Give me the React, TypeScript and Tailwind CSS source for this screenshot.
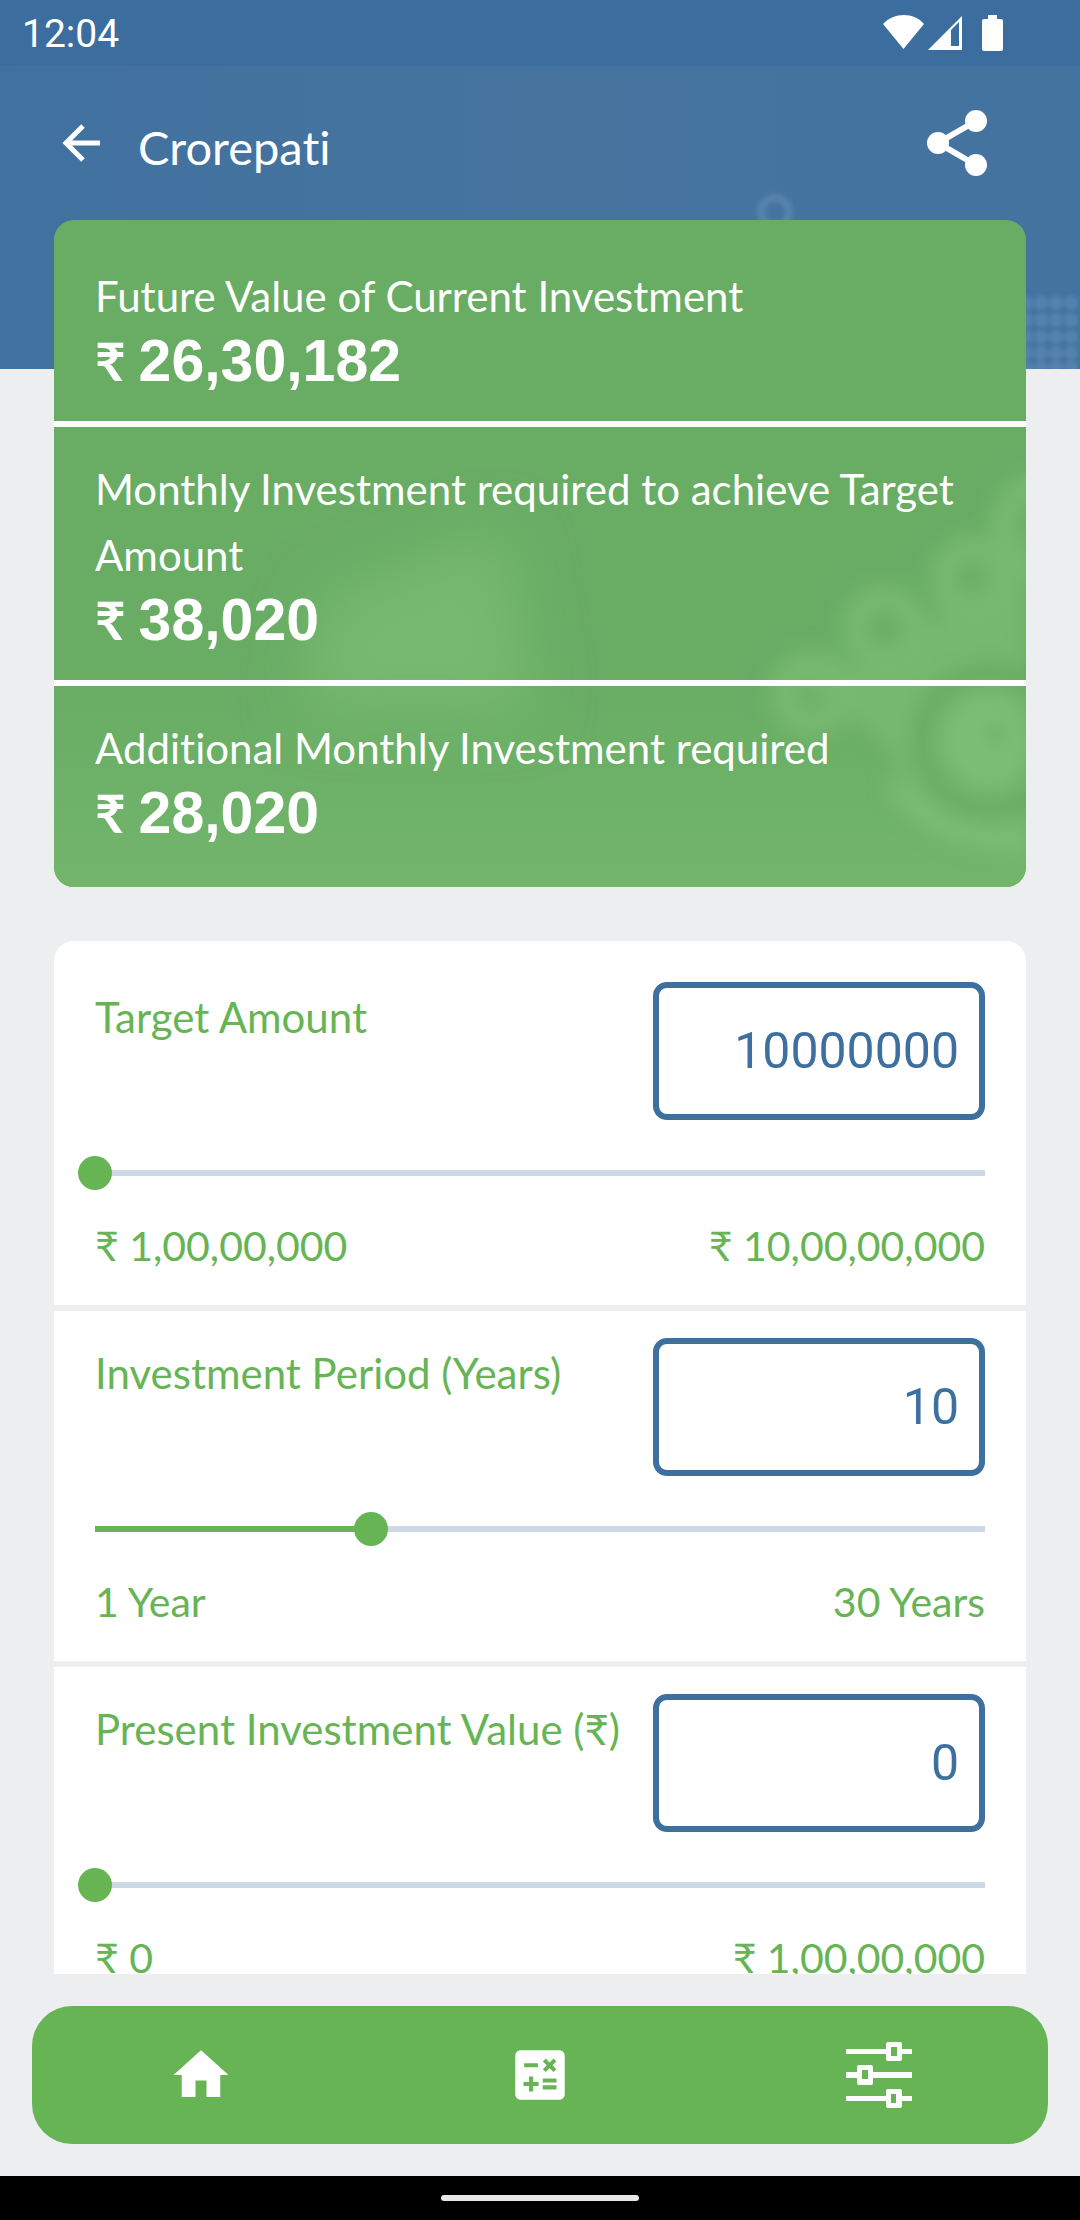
import { useState } from "react";
import { MdCalculate, MdHome } from "react-icons/md";

interface Result {
  label: string;
  value: string;
}

interface Field {
  id: string;
  label: string;
  min: number;
  max: number;
  initial: number;
  minLabel: string;
  maxLabel: string;
}

const results: Result[] = [
  { label: "Future Value of Current Investment", value: "26,30,182" },
  { label: "Monthly Investment required to achieve Target Amount", value: "38,020" },
  { label: "Additional Monthly Investment required", value: "28,020" },
];

const fields: Field[] = [
  { id: "target", label: "Target Amount", min: 10000000, max: 100000000, initial: 10000000, minLabel: "₹ 1,00,00,000", maxLabel: "₹ 10,00,00,000" },
  { id: "period", label: "Investment Period (Years)", min: 1, max: 30, initial: 10, minLabel: "1 Year", maxLabel: "30 Years" },
  { id: "present", label: "Present Investment Value (₹)", min: 0, max: 10000000, initial: 0, minLabel: "₹ 0", maxLabel: "₹ 1,00,00,000" },
];

export default function App() {
  return (
    <div className="h-screen flex flex-col bg-[#edeef0] font-['Lato','Noto_Sans',sans-serif] [font-variant-ligatures:none]">
      <StatusBar />
      <Header />

      <ResultCard />

      <main className="flex-1 min-h-0 mt-[54px] mx-[54px] rounded-t-[20px] overflow-y-auto [scrollbar-width:none]">
        <form className="bg-white pt-3.5 divide-y-6 divide-[#edeef0]">
          {fields.map((f) => (
            <FieldRow key={f.id} field={f} />
          ))}
        </form>
      </main>

      <BottomNav />
      <div className="h-11 shrink-0 bg-black flex items-center justify-center">
        <div className="w-[198px] h-1.5 rounded-full bg-[#e8e8e8]" />
      </div>
    </div>
  );
}

function StatusBar() {
  return (
    <div className="h-[66px] shrink-0 bg-[#3b6e9f] flex items-center justify-between pl-[22px] pr-[76px] text-white">
      <span className="font-['Roboto',sans-serif] text-[39px] leading-none pt-0.5">12:04</span>
      <svg width="122" height="38" viewBox="0 0 122 38" fill="currentColor" aria-hidden="true">
        <path d="M1 10C12-2 32-2 42 10L21.500 35z" />
        <path fillRule="evenodd" d="M46 36L80 2V36zM69 16V32H77V8z" />
        <path d="M106 1h9v4h4a2 2 0 0 1 2 2v28a2 2 0 0 1-2 2h-17a2 2 0 0 1-2-2V7a2 2 0 0 1 2-2h4z" />
      </svg>
    </div>
  );
}

function Header() {
  return (
    <header className="relative shrink-0 bg-linear-to-r from-[#41719f] via-[#46749f] to-[#4473a0] pb-[149px] text-white">
      <HeaderArt />
      <div className="relative h-[154px] flex items-center pl-[54px] pr-[93px]">
        <button type="button" aria-label="Back">
          <BackIcon />
        </button>
        <h1 className="ml-7 pt-2 text-[47px] leading-[60px]">Crorepati</h1>
        <button type="button" aria-label="Share" className="ml-auto">
          <ShareIcon />
        </button>
      </div>
    </header>
  );
}

function BackIcon() {
  return (
    <svg width="56" height="56" viewBox="0 0 56 56" fill="none" stroke="currentColor" strokeWidth="5" aria-hidden="true">
      <path d="M46 28H14M29 11L12 28L29 45" />
    </svg>
  );
}

function ShareIcon() {
  return (
    <svg width="60" height="66" viewBox="0 0 60 66" fill="currentColor" aria-hidden="true">
      <path d="M49 11L11 33L49 55" fill="none" stroke="currentColor" strokeWidth="6" />
      <circle cx="49" cy="11" r="11" />
      <circle cx="11" cy="33" r="11" />
      <circle cx="49" cy="55" r="11" />
    </svg>
  );
}

function HeaderArt() {
  const cols = [8, 23, 38, 53];
  const rows = [237, 254, 271, 287, 302];
  return (
    <svg className="absolute inset-y-0 right-0 h-full" width="340" height="303" viewBox="-20 0 340 303" aria-hidden="true">
      <defs>
        <filter id="soft" x="-50%" y="-50%" width="200%" height="200%">
          <feGaussianBlur stdDeviation="2" />
        </filter>
      </defs>
      <g filter="url(#soft)">
        <circle cx="15" cy="146" r="14" fill="none" stroke="#5583ac" strokeWidth="8" />
        {rows.map((y) => cols.map((x) => <circle key={`${x}-${y}`} cx={x + 258} cy={y} r="7" fill="#5583ad" />))}
      </g>
    </svg>
  );
}

function ResultCard() {
  return (
    <section className="relative shrink-0 -mt-[149px] mx-[54px] rounded-[20px] overflow-hidden bg-[#69ac64] text-white">
      <CardArt />
      <dl className="relative py-3.5 divide-y-6 divide-white">
        {results.map((r) => (
          <div key={r.label} className="pt-[29px] pb-7 px-[41px]">
            <dt className="text-[42px] leading-[66px]">{r.label}</dt>
            <dd className="text-[59px] leading-[64px] font-bold font-['Liberation_Sans',sans-serif]">
              <span className="font-['Lato',sans-serif] text-[53px]">₹ </span>
              {r.value}
            </dd>
          </div>
        ))}
      </dl>
    </section>
  );
}

function CardArt() {
  return (
    <svg className="absolute inset-0 w-full h-full" viewBox="0 0 972 666" preserveAspectRatio="xMaxYMax slice" aria-hidden="true">
      <defs>
        <filter id="haze" x="-50%" y="-50%" width="200%" height="200%">
          <feGaussianBlur stdDeviation="30" />
        </filter>
        <filter id="coins" x="-50%" y="-50%" width="200%" height="200%">
          <feGaussianBlur stdDeviation="10" />
        </filter>
        <linearGradient id="floor" x1="0" y1="0" x2="0" y2="1">
          <stop offset="0" stopColor="#72b56b" stopOpacity="0" />
          <stop offset="1" stopColor="#72b56b" />
        </linearGradient>
      </defs>
      <rect x="0" y="470" width="972" height="196" fill="url(#floor)" />
      <path d="M270 380L450 310L480 490H250z" fill="#77b96f" filter="url(#haze)" />
      <g filter="url(#coins)">
        <path d="M745 460L800 450L880 400L972 310V640L880 600L830 520z" fill="#79bb71" fillOpacity="0.8" />
        <g fill="none" stroke="#77b96f" strokeWidth="26">
          <circle cx="759" cy="472" r="30" />
          <circle cx="831" cy="408" r="30" />
          <circle cx="919" cy="358" r="30" />
          <circle cx="992" cy="306" r="42" />
        </g>
        <circle cx="831" cy="406" r="14" fill="#6aac64" />
        <circle cx="919" cy="358" r="14" fill="#6aac64" />
        <circle cx="936" cy="520" r="68" fill="none" stroke="#69ab64" strokeWidth="22" />
        <circle cx="936" cy="520" r="42" fill="#7cbe74" />
        <circle cx="942" cy="514" r="8" fill="#62a55d" />
        <path d="M840 560Q870 620 972 622" fill="none" stroke="#7cbd73" strokeWidth="18" />
      </g>
    </svg>
  );
}

function FieldRow({ field }: { field: Field }) {
  const [value, setValue] = useState(String(field.initial));
  const current = Math.min(field.max, Math.max(field.min, Number(value) || field.min));
  const percent = ((current - field.min) / (field.max - field.min)) * 100;

  return (
    <div className="px-[41px] pt-[27px] pb-6 leading-[70px] text-[#67b455]">
      <div className="flex items-start justify-between">
        <label htmlFor={field.id} className="text-[42px] whitespace-nowrap">{field.label}</label>
        <input
          id={field.id}
          type="text"
          inputMode="numeric"
          value={value}
          onChange={(e) => setValue(e.target.value)}
          className="w-[332px] h-[138px] shrink-0 rounded-[14px] border-6 border-[#3e709f] pr-5 text-right font-['Roboto',sans-serif] text-[50px] text-[#3e709f] outline-none"
        />
      </div>

      <div className="relative mt-9 h-[34px] flex items-center">
        <div className="w-full h-1.5 bg-[#cddae5]">
          <div className="h-full bg-[#67b455]" style={{ width: `${percent}%` }} />
        </div>
        <input
          type="range"
          aria-label={field.label}
          min={field.min}
          max={field.max}
          value={current}
          onChange={(e) => setValue(e.target.value)}
          className="absolute inset-y-0 -left-[17px] w-[calc(100%+34px)] appearance-none bg-transparent [&::-webkit-slider-thumb]:appearance-none [&::-webkit-slider-thumb]:w-[34px] [&::-webkit-slider-thumb]:h-[34px] [&::-webkit-slider-thumb]:rounded-full [&::-webkit-slider-thumb]:bg-[#67b455]"
        />
      </div>

      <div className="mt-[21px] flex justify-between text-[41px]">
        <span>{field.minLabel}</span>
        <span>{field.maxLabel}</span>
      </div>
    </div>
  );
}

function BottomNav() {
  return (
    <div className="shrink-0 p-8">
      <nav className="h-[138px] rounded-[40px] bg-[#67b455] grid grid-cols-3 place-items-center text-white">
        <a href="#home" aria-label="Home"><MdHome size={66} /></a>
        <a href="#calculators" aria-label="Calculators"><MdCalculate size={66} /></a>
        <a href="#settings" aria-label="Settings"><SlidersIcon /></a>
      </nav>
    </div>
  );
}

function SlidersIcon() {
  return (
    <svg width="66" height="66" viewBox="0 0 66 66" fill="currentColor" fillRule="evenodd" aria-hidden="true">
      <path d="M0 7h40v5H0zM56 7h10v5H56zM42 0h12a2 2 0 0 1 2 2v15a2 2 0 0 1-2 2H42a2 2 0 0 1-2-2V2a2 2 0 0 1 2-2zM45 5v9h6V5z" />
      <path d="M0 30h11v6H0zM27 30h39v6H27zM13 23h12a2 2 0 0 1 2 2v16a2 2 0 0 1-2 2H13a2 2 0 0 1-2-2V25a2 2 0 0 1 2-2zM16 28v9h6v-9z" />
      <path d="M0 54h40v5H0zM56 54h10v5H56zM42 47h12a2 2 0 0 1 2 2v15a2 2 0 0 1-2 2H42a2 2 0 0 1-2-2V49a2 2 0 0 1 2-2zM45 52v9h5v-9z" />
    </svg>
  );
}
